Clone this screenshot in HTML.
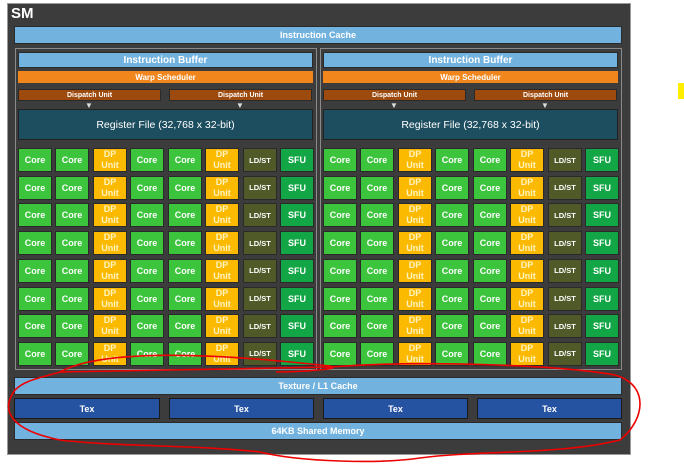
<!DOCTYPE html>
<html><head><meta charset="utf-8"><style>
*{margin:0;padding:0;box-sizing:border-box}
body{width:684px;height:467px;background:#fff;position:relative;overflow:hidden;font-family:"Liberation Sans",sans-serif;font-weight:bold;color:#fff}
.a{position:absolute;display:flex;align-items:center;justify-content:center;text-align:center}
.lb{background:#72b2de;border:1px solid #2a2a2a}
.c{font-size:9px;border:1px solid #2a2a2a}
.core{background:#3cc43c}
.dp{background:#fbb900;color:#fff4c0;line-height:11px}
.ld{background:#4f5a28;font-size:7.5px}
.sfu{background:#12a646}
</style></head><body>
<div class="a" style="left:7px;top:3px;width:624px;height:452px;background:#3c3c3c;border:1px solid #999"></div>
<div class="a" style="left:11px;top:5px;font-size:15px;justify-content:flex-start">SM</div>
<div class="a lb" style="left:14px;top:26px;width:608px;height:18px;font-size:9px">Instruction Cache</div>
<div id="p"></div>
<div class="a lb" style="left:14px;top:377px;width:608px;height:18px;font-size:9px">Texture / L1 Cache</div>
<div class="a" style="left:14px;top:398px;width:146px;height:21px;background:#2652a2;border:1px solid #1a1a1a;font-size:9px">Tex</div>
<div class="a" style="left:169px;top:398px;width:145px;height:21px;background:#2652a2;border:1px solid #1a1a1a;font-size:9px">Tex</div>
<div class="a" style="left:323px;top:398px;width:145px;height:21px;background:#2652a2;border:1px solid #1a1a1a;font-size:9px">Tex</div>
<div class="a" style="left:477px;top:398px;width:145px;height:21px;background:#2652a2;border:1px solid #1a1a1a;font-size:9px">Tex</div>
<div class="a lb" style="left:14px;top:422px;width:608px;height:18px;font-size:9px">64KB Shared Memory</div>
<div class="a" style="left:678px;top:83px;width:6px;height:16px;background:#ffee00"></div>
<svg style="position:absolute;left:0;top:0" width="684" height="467"><path d="M60 372 C100 350,200 352,320 365 C360 368,300 372,276 372 M330 367 C420 360,560 365,615 375 C650 385,645 420,620 440 C560 455,480 450,420 458 C380 464,300 462,260 452 C200 445,120 447,60 440 C10 430,0 410,15 390 C25 380,40 378,60 372 Z" fill="none" stroke="#e00" stroke-width="1.6"/></svg>
<script>
var h='';
[0,305].forEach(function(o){
h+='<div class="a" style="left:'+(15+o)+'px;top:48px;width:302px;height:322px;border:1px solid #8a8a8a"></div>';
h+='<div class="a lb" style="left:'+(18+o)+'px;top:52px;width:295px;height:16px;font-size:10px">Instruction Buffer</div>';
h+='<div class="a" style="left:'+(18+o)+'px;top:71px;width:295px;height:12px;background:#f0861c;font-size:8px">Warp Scheduler</div>';
h+='<div class="a" style="left:'+(18+o)+'px;top:89px;width:143px;height:12px;background:#9c4a0e;border:1px solid #2a2a2a;font-size:7px">Dispatch Unit</div>';
h+='<div class="a" style="left:'+(169+o)+'px;top:89px;width:143px;height:12px;background:#9c4a0e;border:1px solid #2a2a2a;font-size:7px">Dispatch Unit</div>';
h+='<div class="a" style="left:'+(85+o)+'px;top:101px;font-size:8px;color:#ddd">&#9660;</div><div class="a" style="left:'+(236+o)+'px;top:101px;font-size:8px;color:#ddd">&#9660;</div>';
h+='<div class="a" style="left:'+(18+o)+'px;top:109px;width:295px;height:31px;background:#1d4e60;border:1px solid #222;font-size:10.5px;font-weight:normal">Register File (32,768 x 32-bit)</div>';
var xs=[18,55,93,130,168,205,243,280];
var t=['core','core','dp','core','core','dp','ld','sfu'];
var tx=['Core','Core','DP<br>Unit','Core','Core','DP<br>Unit','LD/ST','SFU'];
for(var r=0;r<8;r++){for(var c=0;c<8;c++){
h+='<div class="a c '+t[c]+'" style="left:'+(xs[c]+o)+'px;top:'+(148+r*27.7)+'px;width:34px;height:24px">'+tx[c]+'</div>';}}
});
document.getElementById('p').innerHTML=h;
</script>
</body></html>
